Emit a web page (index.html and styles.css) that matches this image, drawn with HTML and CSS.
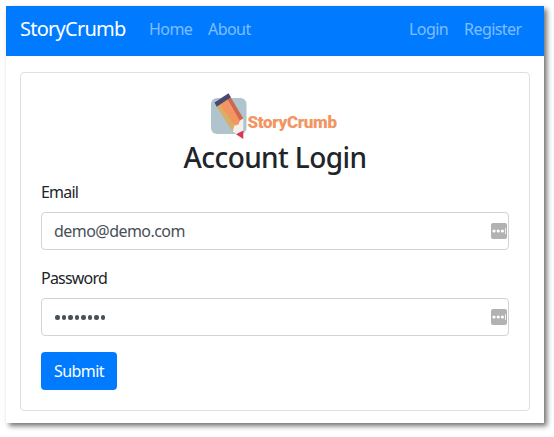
FILE: index.html
```html
<!DOCTYPE html>
<html lang="en">
<head>
<meta charset="utf-8">
<title>StoryCrumb</title>
<link rel="stylesheet" href="styles.css">
</head>
<body>
<div class="window">
  <nav class="navbar">
    <a class="brand">StoryCrumb</a>
    <a class="link home">Home</a>
    <a class="link about">About</a>
    <a class="link login">Login</a>
    <a class="link register">Register</a>
  </nav>
  <main class="card">
    <svg class="logo" width="136" height="48" viewBox="0 0 136 48">
      <rect x="1" y="5" width="35.500" height="36" rx="6" fill="#afc4cc"/>
      <path d="M6.500 13 20 4 33 26 30 34 22.700 38Z" fill="#f29562"/>
      <path d="M6.500 13.500 10 11.500 25 33 22.700 38Z" fill="#d9ae67"/>
      <path d="M17.500 6 20.500 4 33.300 25.500 30 28Z" fill="#cd6752"/>
      <path d="M22.700 38 24.500 32.500 28.500 31.500 30 27.500 33.300 25.500V38L27 42Z" fill="#f2f0ea"/>
      <path d="M26 41.300 33.300 37.500V46Z" fill="#d8365d"/>
      <path d="M4.500 9.500 18.500 .3 20.900 4.300 6.700 13.700Z" fill="#494870"/>
      <text x="37.500" y="34.500" textLength="89.500" lengthAdjust="spacing" class="wordmark">StoryCrumb</text>
    </svg>
    <h1 class="title">Account Login</h1>
    <form class="form">
      <label class="label" for="email">Email</label>
      <div class="field">
        <input class="input" id="email" type="text" value="demo@demo.com">
        <svg class="key" width="16" height="16" viewBox="0 0 16 16"><rect width="16" height="16" rx="2" fill="#b2b2b2"/><g fill="#fff"><circle cx="3" cy="8" r="1.600"/><circle cx="7.200" cy="8" r="1.600"/><circle cx="11.400" cy="8" r="1.600"/><path d="M14 5h.8v6H14z"/></g></svg>
      </div>
      <label class="label password-label" for="password">Password</label>
      <div class="field">
        <div class="input dots" id="password"><i></i><i></i><i></i><i></i><i></i><i></i><i></i><i></i></div>
        <svg class="key" width="16" height="16" viewBox="0 0 16 16"><rect width="16" height="16" rx="2" fill="#b2b2b2"/><g fill="#fff"><circle cx="3" cy="8" r="1.600"/><circle cx="7.200" cy="8" r="1.600"/><circle cx="11.400" cy="8" r="1.600"/><path d="M14 5h.8v6H14z"/></g></svg>
      </div>
      <button class="submit" type="button">Submit</button>
    </form>
  </main>
</div>
</body>
</html>
```
FILE: styles.css
```css
* { box-sizing: border-box; }
body {
  margin: 0;
  padding: 6px 10px 14px 6px;
  height: 437px;
  overflow: hidden;
  background: #fff;
  color: #212529;
  font: 16px/24px "Noto Sans", "Open Sans", sans-serif;
}
.window {
  height: 417px;
  background: #fff;
  box-shadow: 3px 3px 5px rgba(0, 0, 0, .55);
}
.navbar {
  display: flex;
  align-items: center;
  height: 50px;
  padding: 0 22px 4px 13px;
  background: #007bff;
  white-space: nowrap;
}
.brand { width: 130px; padding-left: 1px; color: #fff; font-size: 20px; letter-spacing: -.75px; }
.link { color: rgba(255, 255, 255, .5); letter-spacing: -.55px; }
.home { width: 59px; }
.login { margin-left: auto; width: 55px; }
.register { width: 58px; }
.card {
  width: 510px;
  height: 339px;
  margin: 16px 0 0 14px;
  padding: 20px;
  border: 1px solid #dfdfdf;
  border-radius: 4px;
}
.logo { display: block; margin-left: 169px; overflow: visible; }
.wordmark { font: 900 17px/24px "Roboto", sans-serif; fill: #f29562; }
.title {
  margin: -1px 0 0;
  text-align: center;
  font-size: 28px;
  line-height: 34px;
  font-weight: 500;
  letter-spacing: -.6px;
}
.form { margin-top: 6px; }
.label { display: block; height: 24px; margin-bottom: 8px; letter-spacing: -.8px; }
.password-label { margin-top: 16px; }
.field { position: relative; height: 38px; }
.input {
  display: block;
  width: 100%;
  height: 38px;
  padding: 6px 12px;
  border: 1px solid #ced4da;
  border-radius: 4px;
  background: #fff;
  color: #495057;
  font: inherit;
  letter-spacing: -.55px;
}
.dots { display: flex; align-items: center; gap: 2px; padding-left: 13px; padding-top: 7px; }
.dots i { width: 4.5px; height: 4.5px; border-radius: 50%; background: #495057; }
.key { position: absolute; right: 2px; top: 11px; }
.submit {
  display: block;
  width: 76px;
  height: 38px;
  margin-top: 16px;
  padding: 0;
  border: 0;
  border-radius: 4px;
  background: #007bff;
  color: #fff;
  font: inherit;
  letter-spacing: -.6px;
}
```
